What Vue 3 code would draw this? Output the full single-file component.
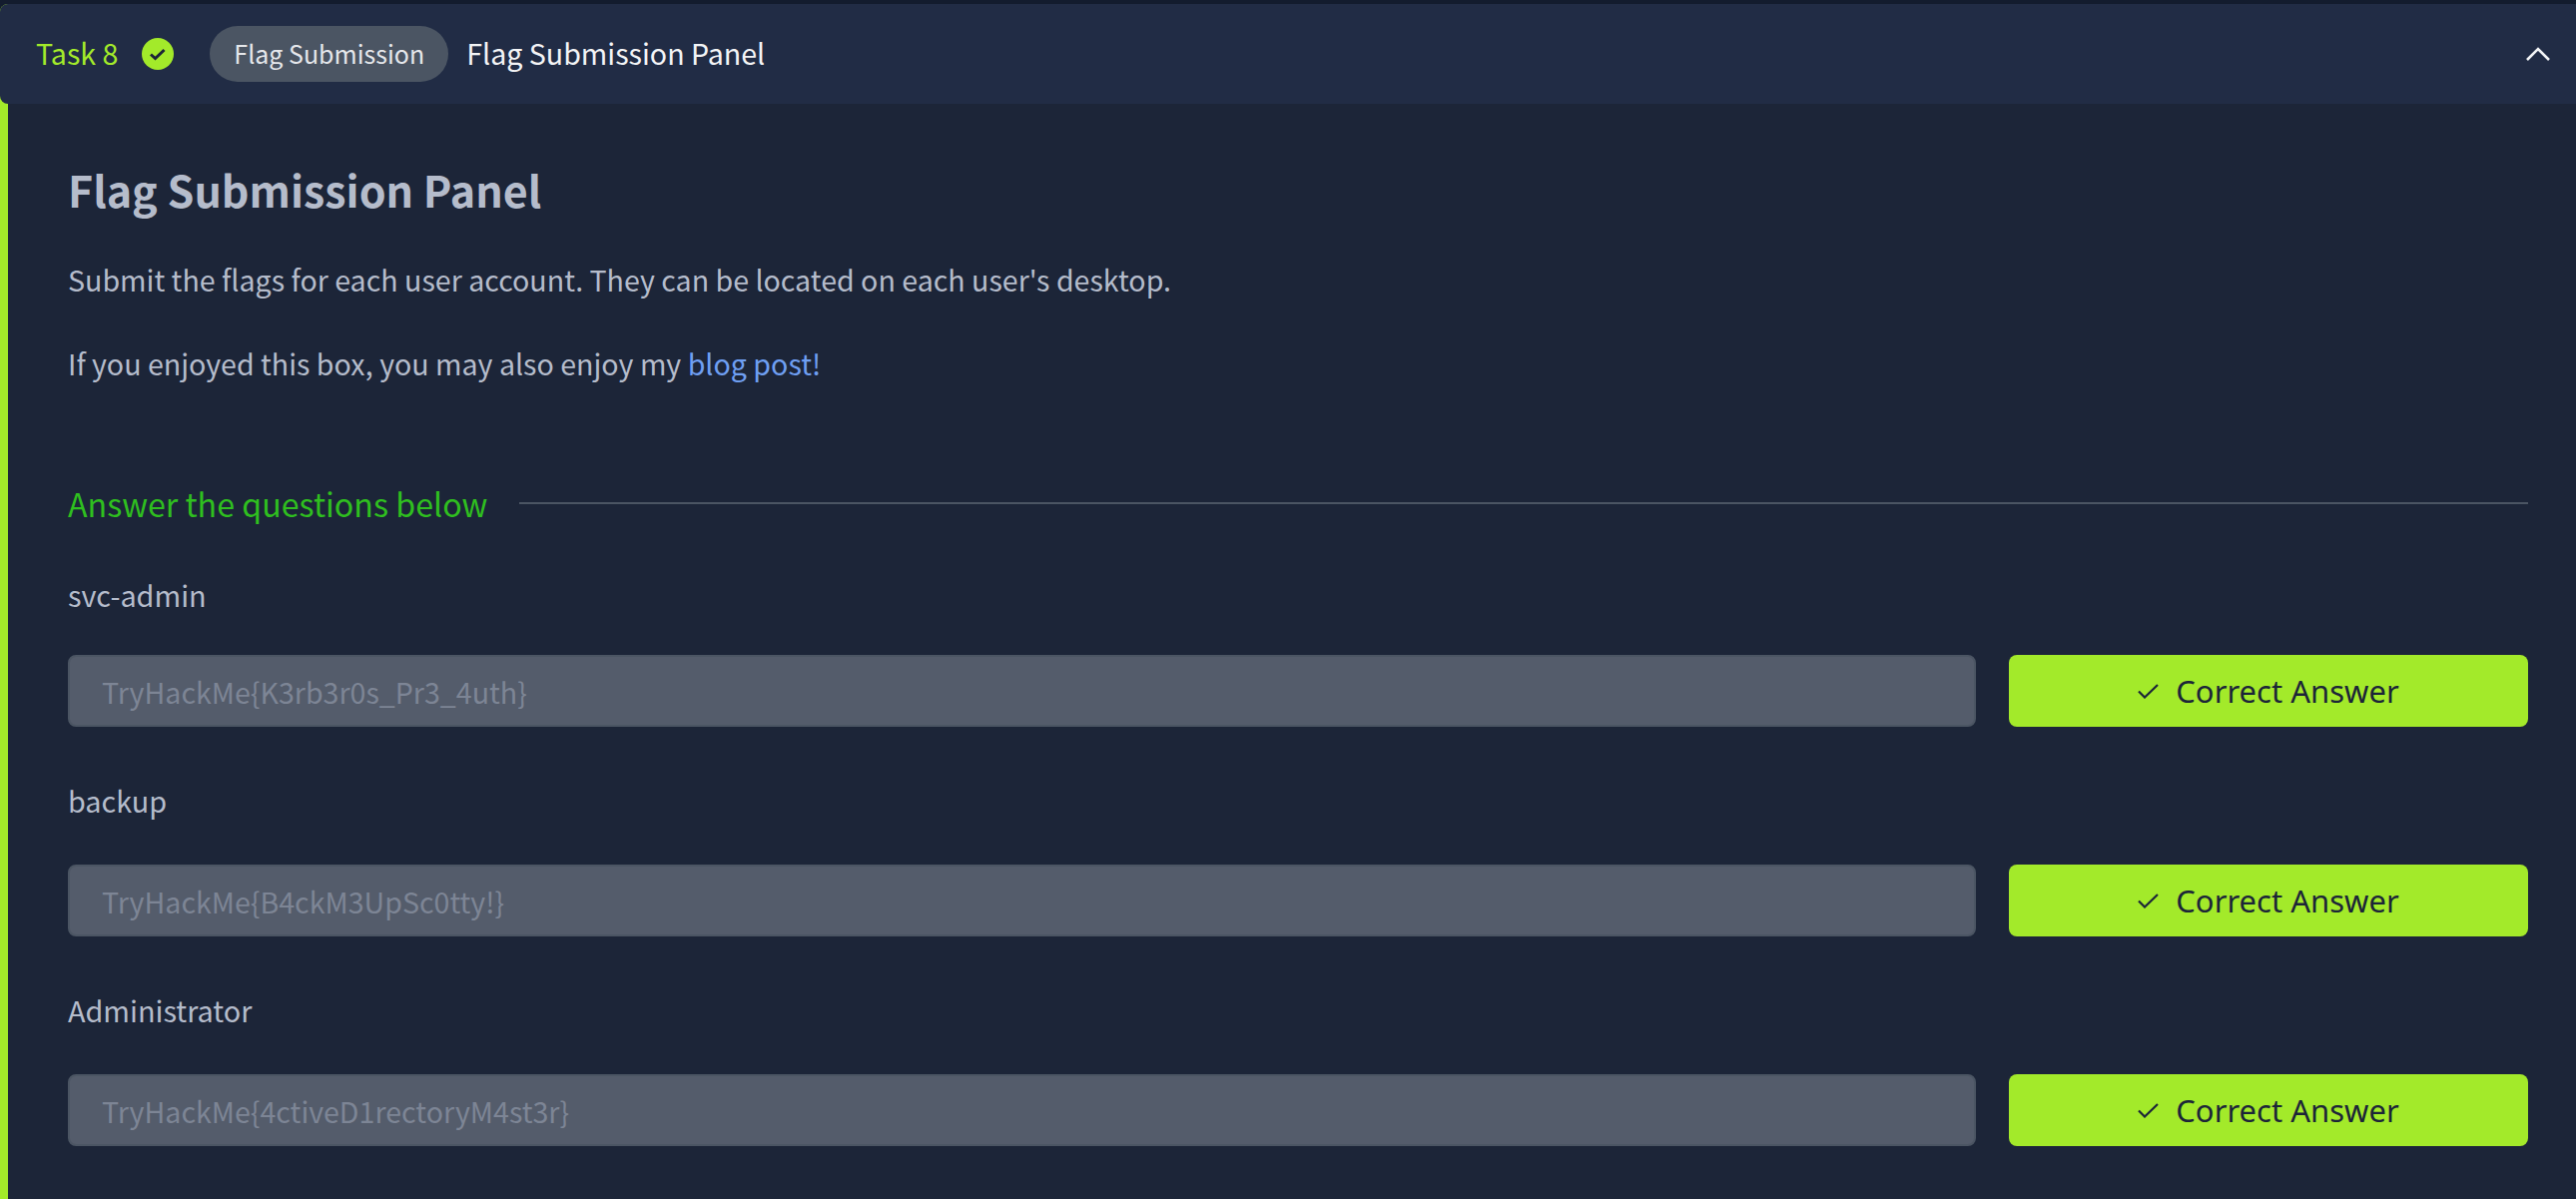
<template>
  <div class="page">
    <div class="task-card">
      <div class="task-header">
        <span class="task-no">Task 8</span>
        <svg class="done-icon" viewBox="0 0 32 32">
          <circle cx="16" cy="16" r="16" fill="#a3ea2a" />
          <path d="M9 16.5l4.5 4L22.5 12" fill="none" stroke="#1c2538" stroke-width="3" />
        </svg>
        <span class="pill">Flag Submission</span>
        <span class="task-title">Flag Submission Panel</span>
        <svg class="chevron" viewBox="0 0 24 14">
          <path d="M1 13L12 2l11 11" fill="none" stroke="#f3f4f6" stroke-width="2.6" />
        </svg>
      </div>
      <div class="task-body">
        <h2>Flag Submission Panel</h2>
        <p>Submit the flags for each user account. They can be located on each user's desktop.</p>
        <p>If you enjoyed this box, you may also enjoy my <a href="#">blog post!</a></p>
        <div class="answer-head">
          <span>Answer the questions below</span>
          <div class="rule"></div>
        </div>
        <div v-for="q in questions" :key="q.label" class="question">
          <div class="q-label">{{ q.label }}</div>
          <div class="q-row">
            <input class="q-input" :value="q.flag" disabled />
            <button class="q-btn">
              <svg viewBox="0 0 21 15"><path d="M1 7.5l6 6L20 1" fill="none" stroke="#1c2538" stroke-width="2.2" /></svg>
              Correct Answer
            </button>
          </div>
        </div>
      </div>
    </div>
  </div>
</template>

<script setup>
const questions = [
  { label: 'svc-admin', flag: 'TryHackMe{K3rb3r0s_Pr3_4uth}' },
  { label: 'backup', flag: 'TryHackMe{B4ckM3UpSc0tty!}' },
  { label: 'Administrator', flag: 'TryHackMe{4ctiveD1rectoryM4st3r}' }
]
</script>

<style>
html, body { margin: 0; background: #1c2538; overflow: hidden; }
</style>

<style scoped>
.page {
  height: 1201px;
  padding-top: 4px;
  box-sizing: border-box;
  background: #131c2e;
  font-family: "Noto Sans CJK SC", "Noto Sans", sans-serif;
}

.task-card {
  height: 1197px;
  background: #1c2538;
  border-left: 8px solid #a3ea2a;
  border-radius: 8px 0 0 0;
}

.task-header {
  height: 100px;
  margin-left: -8px;
  padding: 0 26px 0 36px;
  display: flex;
  align-items: center;
  background: #212c45;
  border-radius: 8px 0 0 8px;
}

.task-no {
  font-size: 28.6px;
  line-height: 40px;
  margin-top: -2px;
  color: #a3ea2a;
}

.done-icon {
  width: 32px;
  height: 32px;
  margin-left: 24px;
}

.pill {
  height: 56px;
  line-height: 54px;
  margin-left: 36px;
  padding: 0 24px;
  border-radius: 28px;
  background: #4b5563;
  color: #e5e7eb;
  font-size: 25px;
}

.task-title {
  margin-left: 18px;
  font-size: 28.6px;
  line-height: 40px;
  margin-top: -3px;
  color: #f3f4f6;
  flex: 1;
}

.chevron {
  width: 24px;
  height: 14px;
}

.task-body {
  padding: 58px 48px 0 60px;
  color: #b5bccb;
}

h2 {
  margin: 0;
  font-size: 43px;
  line-height: 54px;
  font-weight: 700;
}

p {
  margin: 38px 0 0;
  font-size: 28.6px;
  line-height: 52px;
}

p + p {
  margin-top: 32px;
}

a {
  color: #6f9ff2;
  text-decoration: none;
}

.answer-head {
  display: flex;
  align-items: center;
  gap: 32px;
  margin-top: 89px;
  height: 50px;
  font-size: 32.2px;
  color: #2fbf1f;
}

.rule {
  flex: 1;
  height: 2px;
  background: #4b5563;
}

.q-label {
  margin-top: 52px;
  font-size: 28.8px;
  line-height: 44px;
}

.q-row {
  display: flex;
  gap: 33px;
  margin-top: 42px;
}

/* first row sits a little tighter under its label */
.answer-head + .question .q-label {
  margin-top: 45px;
}

.answer-head + .question .q-row {
  margin-top: 38px;
}

.q-input {
  flex: 1;
  height: 72px;
  box-sizing: border-box;
  padding: 0 32px;
  border: 2px solid #4b5563;
  border-radius: 8px;
  background: #545c6b;
  color: #7d8595;
  font-family: inherit;
  font-size: 28.6px;
}

.q-btn {
  width: 520px;
  height: 72px;
  display: flex;
  align-items: center;
  justify-content: center;
  gap: 17px;
  border: 0;
  border-radius: 8px;
  background: #a3ea2a;
  color: #1c2538;
  font-family: "Noto Sans", sans-serif;
  font-size: 31px;
}

.q-btn svg {
  width: 21px;
  height: 15px;
}
</style>
